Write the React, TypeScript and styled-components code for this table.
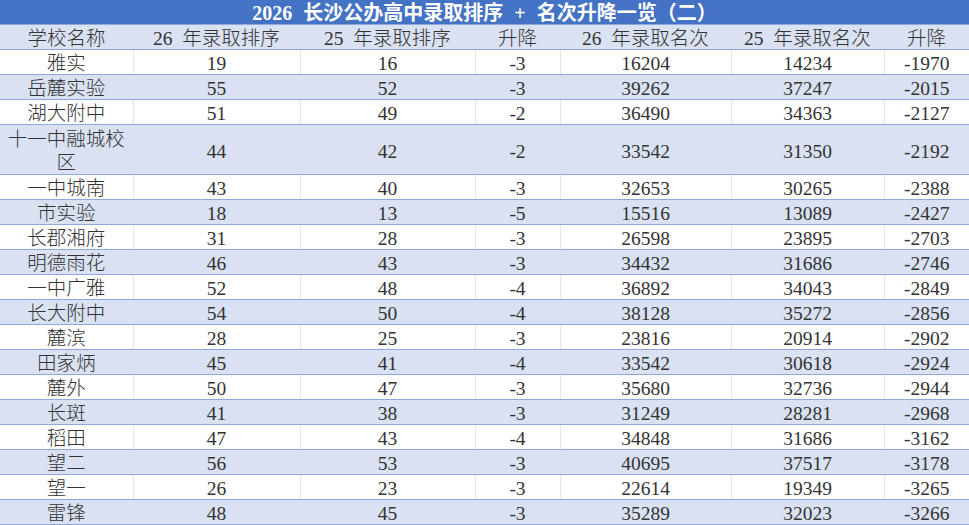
import React from "react";
import styled, { createGlobalStyle } from "styled-components";

const GlobalStyle = createGlobalStyle`
  html, body {
    margin: 0;
    padding: 0;
    background: #ffffff;
  }
  body {
    font-family: "Liberation Serif", "Noto Sans CJK SC", serif;
  }
`;

const Table = styled.table`
  width: 969px;
  border-collapse: collapse;
  table-layout: fixed;
  font-family: "Liberation Serif", "Noto Sans CJK SC", serif;
`;

const TitleCell = styled.th`
  background: #4472c4;
  color: #ffffff;
  font-size: 20px;
  font-weight: 700;
  height: 22px;
  line-height: 22px;
  padding: 2px 0 0;
  text-align: center;
  white-space: pre;
  word-spacing: 0.3em;
  border-bottom: 1px solid #8ea9db;
`;

const HeadRow = styled.tr`
  background: #d9e1f2;
`;

const HeadCell = styled.th`
  font-size: 19.5px;
  font-weight: 300;
  color: #333333;
  height: 21px;
  line-height: 21px;
  padding: 3px 0 0;
  text-align: center;
  white-space: pre;
  word-spacing: 0.25em;
  border-bottom: 1px solid #8ea9db;
`;

const Row = styled.tr<{ $alt: boolean; $tall?: boolean }>`
  background: ${(p) => (p.$alt ? "#d9e1f2" : "#ffffff")};
  & > td {
    border-left: 1px solid ${(p) => (p.$alt ? "#d9e1f2" : "#e4e4e4")};
    height: ${(p) => (p.$tall ? "46px" : "21px")};
    line-height: ${(p) => (p.$tall ? "23px" : "21px")};
  }
  & > td:first-child {
    border-left: none;
  }
`;

const Cell = styled.td`
  font-size: 19.5px;
  font-weight: 300;
  color: #333333;
  padding: 3px 3px 0;
  text-align: center;
  border-bottom: 1px solid #8ea9db;
  word-break: break-all;
`;

const widths = [133, 167, 175, 85, 171, 153, 85];

const headers = [
  "学校名称",
  "26 年录取排序",
  "25 年录取排序",
  "升降",
  "26 年录取名次",
  "25 年录取名次",
  "升降",
];

const rows: (string | number)[][] = [
  ["雅实", 19, 16, "-3", 16204, 14234, "-1970"],
  ["岳麓实验", 55, 52, "-3", 39262, 37247, "-2015"],
  ["湖大附中", 51, 49, "-2", 36490, 34363, "-2127"],
  ["十一中融城校区", 44, 42, "-2", 33542, 31350, "-2192"],
  ["一中城南", 43, 40, "-3", 32653, 30265, "-2388"],
  ["市实验", 18, 13, "-5", 15516, 13089, "-2427"],
  ["长郡湘府", 31, 28, "-3", 26598, 23895, "-2703"],
  ["明德雨花", 46, 43, "-3", 34432, 31686, "-2746"],
  ["一中广雅", 52, 48, "-4", 36892, 34043, "-2849"],
  ["长大附中", 54, 50, "-4", 38128, 35272, "-2856"],
  ["麓滨", 28, 25, "-3", 23816, 20914, "-2902"],
  ["田家炳", 45, 41, "-4", 33542, 30618, "-2924"],
  ["麓外", 50, 47, "-3", 35680, 32736, "-2944"],
  ["长斑", 41, 38, "-3", 31249, 28281, "-2968"],
  ["稻田", 47, 43, "-4", 34848, 31686, "-3162"],
  ["望二", 56, 53, "-3", 40695, 37517, "-3178"],
  ["望一", 26, 23, "-3", 22614, 19349, "-3265"],
  ["雷锋", 48, 45, "-3", 35289, 32023, "-3266"],
];

export default function App() {
  return (
    <>
      <GlobalStyle />
      <Table>
        <colgroup>
          {widths.map((w, i) => (
            <col key={i} style={{ width: w }} />
          ))}
        </colgroup>
        <thead>
          <tr>
            <TitleCell colSpan={7}>
              2026 长沙公办高中录取排序 + 名次升降一览（二）
            </TitleCell>
          </tr>
          <HeadRow>
            {headers.map((h, i) => (
              <HeadCell key={i}>{h}</HeadCell>
            ))}
          </HeadRow>
        </thead>
        <tbody>
          {rows.map((r, i) => (
            <Row key={i} $alt={i % 2 === 1} $tall={String(r[0]).length > 6}>
              {r.map((c, j) => (
                <Cell key={j}>{c}</Cell>
              ))}
            </Row>
          ))}
        </tbody>
      </Table>
    </>
  );
}
